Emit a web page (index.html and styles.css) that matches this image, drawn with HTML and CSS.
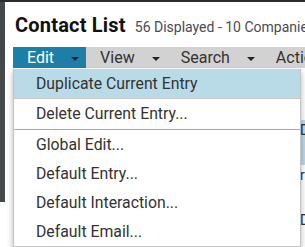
FILE: index.html
```html
<!DOCTYPE html>
<html lang="en">
<head>
    <meta charset="UTF-8">
    <title>Contact List</title>
    <link rel="stylesheet" href="styles.css">
</head>
<body>
    <div class="topbar"></div>
    <div class="layout">
        <div class="sidebar"></div>
        <div class="main">
            <div class="header">
                <h1 class="title">Contact List</h1>
                <span class="count">56 Displayed - 10 Companies</span>
            </div>
            <div class="toolbar">
                <div class="tab active">Edit<span class="caret"></span></div>
                <div class="tab">View<span class="caret"></span></div>
                <div class="tab">Search<span class="caret"></span></div>
                <div class="tab">Actions<span class="caret"></span></div>

                <ul class="menu">
                    <li class="item selected">Duplicate Current Entry</li>
                    <li class="item tall">Delete Current Entry...</li>
                    <li class="divider"></li>
                    <li class="item">Global Edit...</li>
                    <li class="item">Default Entry...</li>
                    <li class="item">Default Interaction...</li>
                    <li class="item">Default Email...</li>
                </ul>
            </div>
            <div class="rows">
                <div class="row blank"></div>
                <div class="row highlight"><span>Dorsey</span></div>
                <div class="row"><span>rr</span></div>
                <div class="row"><span>Dean</span></div>
            </div>
        </div>
    </div>
</body>
</html>
```

FILE: styles.css
```css
body {
    margin: 0;
    background: #fff;
    font-family: Roboto, 'Noto Sans', sans-serif;
    color: #333;
    overflow: hidden;
}

.topbar {
    height: 2px;
    background: #2b2b2b;
}

.layout {
    display: flex;
    align-items: flex-start;
}

.sidebar {
    width: 5px;
    height: 200px;
    background: #43484a;
    flex-shrink: 0;
}

.main {
    flex: 1;
    padding-left: 8px;
}

.header {
    height: 45px;
    display: flex;
    align-items: baseline;
    padding-left: 2px;
    box-sizing: border-box;
    padding-top: 11px;
    white-space: nowrap;
}

.title {
    margin: 0;
    font-size: 20px;
    font-weight: bold;
    letter-spacing: 0.2px;
    color: #111;
}

.count {
    margin-left: 9px;
    font-size: 14px;
    color: #4a4a55;
}

.toolbar {
    position: relative;
    display: flex;
    height: 21px;
    background: #d2d2d2;
    white-space: nowrap;
}

.tab {
    display: flex;
    align-items: center;
    padding: 0 7px 0 14px;
    font-size: 16px;
    color: #333;
}

.tab.active {
    background: #1d7fa7;
    color: #fff;
}

.caret {
    width: 0;
    height: 0;
    margin-left: 17px;
    margin-top: 2px;
    border-left: 4px solid transparent;
    border-right: 4px solid transparent;
    border-top: 4px solid #222;
}

.menu {
    position: absolute;
    top: 22px;
    left: 0;
    width: 286px;
    margin: 0;
    padding: 0;
    list-style: none;
    background: #fff;
    border: 1px solid #c4c4c4;
    border-top: none;
    box-shadow: 0 3px 6px rgba(0, 0, 0, 0.3);
    z-index: 10;
}

.item {
    height: 29px;
    line-height: 29px;
    padding-left: 22px;
    font-size: 15.8px;
    color: #333;
}

.item.tall {
    height: 30px;
    line-height: 30px;
}

.item.selected {
    background: #b9dbe7;
    border-bottom: 1px solid #c8c8c8;
}

.divider {
    height: 1px;
    background: #aaa;
}

.rows {
    padding-left: 287px;
    font-size: 14px;
    color: #333;
}

.row {
    height: 45px;
    line-height: 20px;
    white-space: nowrap;
}

.row.blank {
    height: 52px;
}

.row.highlight {
    background: #b9dbe7;
}
```
